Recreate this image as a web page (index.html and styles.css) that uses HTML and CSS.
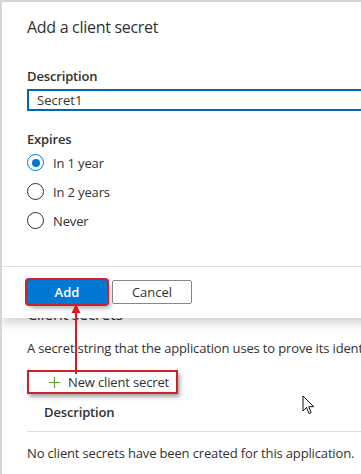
FILE: index.html
```html
<!DOCTYPE html>
<html lang="en">
<head>
    <meta charset="UTF-8">
    <meta name="viewport" content="width=device-width, initial-scale=1.0">
    <title>Certificates &amp; secrets</title>
    <link rel="stylesheet" href="styles.css">
</head>
<body>

<div class="frame">
    <div class="page">
        <h2 class="section-title">Client secrets</h2>
        <p class="section-desc">A secret string that the application uses to prove its identity when requesting a token.</p>
        <div class="toolbar">
            <button class="new-secret">
                <svg width="11" height="11" viewBox="0 0 11 11"><path d="M5.5 0v11M0 5.5h11" stroke="#5ea32e" stroke-width="1.2"/></svg>
                New client secret
            </button>
        </div>
        <div class="table-head">Description</div>
        <p class="empty">No client secrets have been created for this application.</p>
    </div>

    <!-- panel over the page -->
    <div class="panel">
        <h1 class="panel-title">Add a client secret</h1>
        <div class="panel-body">
            <label class="field-label" for="desc">Description</label>
            <input class="text-input" type="text" id="desc" value="Secret1">

            <div class="field-label expires">Expires</div>
            <label class="radio"><input type="radio" name="exp" checked><span class="dot"></span>In 1 year</label>
            <label class="radio"><input type="radio" name="exp"><span class="dot"></span>In 2 years</label>
            <label class="radio"><input type="radio" name="exp"><span class="dot"></span>Never</label>
        </div>
        <div class="panel-footer">
            <button class="btn-primary">Add</button>
            <button class="btn-default">Cancel</button>
        </div>
    </div>

    <svg class="arrow" width="12" height="70" viewBox="0 0 12 70">
        <path d="M6 6v64" stroke="#e4151f" stroke-width="2"/>
        <path d="M6 0l4.5 9h-9z" fill="#e4151f"/>
    </svg>

    <svg class="cursor" width="14" height="21" viewBox="0 0 14 21">
        <path d="M1 1v15l3.5-3.5 2.5 6 2.2-1-2.5-5.8h5z" fill="#fff" stroke="#111" stroke-width="1" stroke-linejoin="round"/>
    </svg>
</div>

</body>
</html>
```

FILE: styles.css
```css
body {
    margin: 0;
    font-family: "Open Sans", "Noto Sans", sans-serif;
    color: #323130;
    background: #fff;
}
.frame {
    position: relative;
    width: 359px;
    height: 472px;
    border-left: 2px solid #d6d6d6;
    border-top: 2px solid #d6d6d6;
    overflow: hidden;
}
.page {
    padding: 301px 0 0 25px;
    font-size: 13px;
    letter-spacing: -0.15px;
}
.section-title {
    margin: 0;
    font-size: 16px;
    font-weight: 400;
    line-height: 22px;
    letter-spacing: -0.3px;
}
.section-desc {
    margin: 14px 0 0;
    line-height: 18px;
    white-space: nowrap;
}
.toolbar {
    margin-top: 13px;
}
.new-secret {
    display: flex;
    align-items: center;
    gap: 8px;
    width: 151px;
    height: 24px;
    padding: 0 0 0 20px;
    background: #fff;
    border: 2px solid #d0202a;
    box-shadow: 2px 3px 4px rgba(0, 0, 0, 0.35);
    font: inherit;
    letter-spacing: -0.15px;
    color: #323130;
}
.table-head {
    margin-top: 9px;
    padding: 0 0 10px 17px;
    font-weight: 600;
    line-height: 18px;
    border-bottom: 1px solid #e1dfdd;
}
.empty {
    margin: 12px 0 0;
    line-height: 18px;
    white-space: nowrap;
}

.panel {
    position: absolute;
    top: 0;
    left: 0;
    right: -20px;
    height: 316px;
    background: #fff;
    box-shadow: 0 5px 10px rgba(0, 0, 0, 0.18);
}
.panel-title {
    margin: 0;
    padding: 13px 25px 0;
    font-size: 16px;
    font-weight: 400;
    line-height: 24px;
    letter-spacing: -0.3px;
}
.panel-body {
    padding: 28px 0 0 25px;
    height: 199px;
    border-bottom: 1px solid #e1dfdd;
    font-size: 13px;
    letter-spacing: -0.15px;
}
.field-label {
    display: block;
    font-size: 13px;
    font-weight: 600;
    line-height: 18px;
}
.text-input {
    display: block;
    box-sizing: border-box;
    width: 360px;
    height: 22px;
    margin-top: 4px;
    padding: 0 8px;
    border: 2px solid #0067b8;
    font: inherit;
    color: #323130;
    outline: none;
}
.expires {
    margin-top: 19px;
}
.radio {
    display: flex;
    align-items: center;
    gap: 9px;
    height: 29px;
}
.radio:first-of-type {
    margin-top: -3px;
}
.radio input {
    display: none;
}
.radio .dot {
    position: relative;
    width: 15px;
    height: 15px;
    border: 1px solid #323130;
    border-radius: 50%;
    box-sizing: content-box;
}
.radio input:checked + .dot {
    border-color: #0078d4;
}
.radio input:checked + .dot::after {
    content: "";
    position: absolute;
    top: 3.5px;
    left: 3.5px;
    width: 8px;
    height: 8px;
    border-radius: 50%;
    background: #0078d4;
}
.panel-footer {
    display: flex;
    gap: 5px;
    padding: 13px 0 0 25px;
}
.panel-footer button {
    box-sizing: border-box;
    width: 80px;
    height: 24px;
    border-radius: 2px;
    font-family: inherit;
    font-size: 13px;
}
.btn-primary {
    background: #0078d4;
    border: 1px solid #0078d4;
    color: #fff;
    font-weight: 600;
    box-shadow: 0 0 0 2px #d0202a, 3px 4px 5px rgba(0, 0, 0, 0.35);
}
.btn-default {
    background: #fff;
    border: 1px solid #8a8886;
    color: #323130;
}

.arrow {
    position: absolute;
    left: 68px;
    top: 302px;
}
.cursor {
    position: absolute;
    left: 300px;
    top: 393px;
}
```
